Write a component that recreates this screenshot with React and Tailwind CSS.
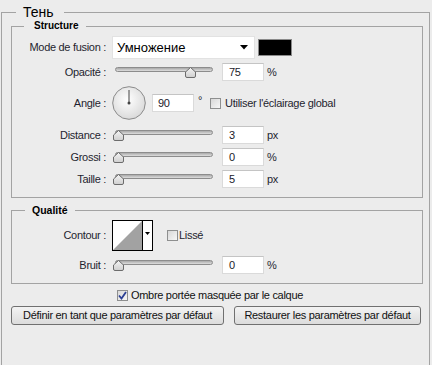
import React from "react";

const font = { fontFamily: '"Liberation Sans", Arial, sans-serif' };

function Slider({ pos }) {
  return (
    <div className="relative w-[104px] h-[18px]">
      <div className="ml-[3px] mt-[4px] w-[98px] h-[5px] rounded-full border border-[#8c8c8c] bg-gradient-to-b from-[#a9a9a9] to-[#dedede]" />
      <svg className="absolute top-[4px]" style={{ left: pos }} width="11" height="11" viewBox="0 0 11 11">
        <defs>
          <linearGradient id="tg" x1="0" y1="0" x2="0" y2="1">
            <stop offset="0" stopColor="#f4f4f4" />
            <stop offset="1" stopColor="#cfcfcf" />
          </linearGradient>
        </defs>
        <path d="M0.5 5 L5.5 0.5 L10.5 5 V9 Q10.5 10.5 9 10.5 H2 Q0.5 10.5 0.5 9 Z" fill="url(#tg)" stroke="#6c6c6c" />
      </svg>
    </div>
  );
}

function Field({ value, pl = "pl-[6px]" }) {
  return (
    <div className={`w-[42px] h-[18px] bg-white border border-[#dadada] border-t-[#c4c4c4] ${pl} flex items-center text-[11px] text-[#1a1a2a]`}>
      {value}
    </div>
  );
}

function Check({ checked }) {
  return (
    <span className="w-[11px] h-[11px] border border-[#8e8f8f] bg-gradient-to-br from-[#d8d8d8] to-[#f7f7f7] flex items-center justify-center shrink-0">
      {checked && (
        <svg width="9" height="9" viewBox="0 0 9 9">
          <path d="M1 4.5 L3.5 7.5 L8 1" fill="none" stroke="#2b3f94" strokeWidth="1.8" />
        </svg>
      )}
    </span>
  );
}

function Label({ children }) {
  return <div className="w-[100px] pr-[6px] text-right text-[11px] text-[#1f1f2f]">{children}</div>;
}

function SliderRow({ label, pos, value, unit, className }) {
  return (
    <div className={`flex items-center h-[18px] ${className}`}>
      <Label>{label}</Label>
      <Slider pos={pos} />
      <div className="ml-[6px]"><Field value={value} /></div>
      <span className="ml-[3px] text-[11px] text-[#1f1f2f]">{unit}</span>
    </div>
  );
}

export default function App() {
  return (
    <div className="w-[432px] h-[365px] overflow-hidden bg-[#ececec] pt-[4px] tracking-[-0.3px]" style={font}>
      <fieldset className="ml-[1px] w-[429px] h-[400px] border border-[#a3a3a3]">
        <legend className="ml-[14px] pl-[7px] pr-[10px] text-[14px] leading-[16px] text-black tracking-normal">Тень</legend>

        {/* Structure */}
        <fieldset className="ml-[9px] w-[412px] border border-[#a3a3a3] pb-[9px]">
          <legend className="ml-[12px] pl-[10px] pr-[8px] text-[10px] leading-[12px] font-bold text-black tracking-normal">Structure</legend>

          <div className="flex items-center h-[23px] mt-[4px]">
            <Label>Mode de fusion :</Label>
            <div className="w-[143px] h-[23px] bg-white border border-[#e2e2e2] flex items-center justify-between pl-[4px] pr-[6px]">
              <span className="text-[13px] text-black tracking-normal">Умножение</span>
              <svg width="8" height="5" viewBox="0 0 8 5"><path d="M0 0 H8 L4 4.5 Z" fill="#000" /></svg>
            </div>
            <div className="ml-[3px] w-[34px] h-[17px] bg-black border border-[#8a8a8a]" />
          </div>

          <SliderRow label="Opacité :" pos={73} value="75" unit="%" className="mt-[4px]" />

          <div className="flex items-center h-[34px] mt-[5px]">
            <Label>Angle :</Label>
            <svg width="34" height="34" viewBox="0 0 34 34">
              <defs>
                <radialGradient id="dg" cx="0.45" cy="0.4" r="0.6">
                  <stop offset="0" stopColor="#ffffff" />
                  <stop offset="1" stopColor="#dadada" />
                </radialGradient>
              </defs>
              <circle cx="17" cy="17" r="16.3" fill="url(#dg)" stroke="#8a8a8a" />
              <line x1="17" y1="17" x2="17" y2="4" stroke="#444" strokeWidth="1" />
              <circle cx="17" cy="17" r="1.5" fill="#444" />
            </svg>
            <div className="ml-[6px]"><Field value="90" pl="pl-[5px]" /></div>
            <span className="ml-[4px] self-start mt-[6px] text-[11px] text-[#1f1f2f]">°</span>
            <span className="ml-[8px]"><Check /></span>
            <span className="ml-[4px] text-[11px] text-[#1f1f2f]">Utiliser l'éclairage global</span>
          </div>

          <SliderRow label="Distance :" pos={1} value="3" unit="px" className="mt-[6px]" />
          <SliderRow label="Grossi :" pos={1} value="0" unit="%" className="mt-[4px]" />
          <SliderRow label="Taille :" pos={1} value="5" unit="px" className="mt-[4px]" />
        </fieldset>

        {/* Qualité */}
        <fieldset className="ml-[9px] mt-[6px] w-[412px] border border-[#a3a3a3] pb-[9px]">
          <legend className="ml-[13px] px-[7px] text-[10.5px] leading-[12px] font-bold text-black tracking-normal">Qualité</legend>

          <div className="flex items-center h-[31px] mt-[4px]">
            <Label>Contour :</Label>
            <div className="w-[41px] h-[31px] border border-black bg-white flex">
              <svg width="29" height="29" viewBox="0 0 29 29" className="shrink-0">
                <path d="M0 29 L29 0 V29 Z" fill="#a2a2a2" />
              </svg>
              <div className="w-[10px] border-l border-black flex items-center justify-center pb-[4px]">
                <svg width="5" height="3" viewBox="0 0 5 3"><path d="M0 0 H5 L2.5 3 Z" fill="#000" /></svg>
              </div>
            </div>
            <span className="ml-[14px]"><Check /></span>
            <span className="ml-[1px] text-[11px] text-[#1f1f2f]">Lissé</span>
          </div>

          <SliderRow label="Bruit :" pos={1} value="0" unit="%" className="mt-[5px]" />
        </fieldset>

        <div className="flex items-center h-[11px] mt-[6px] ml-[115px]">
          <Check checked />
          <span className="ml-[3px] text-[11px] text-[#111]">Ombre portée masquée par le calque</span>
        </div>

        <div className="flex mt-[5px] ml-[9px] gap-[10px]">
          <button className="w-[213px] h-[19px] rounded-[3px] border border-[#707070] bg-gradient-to-b from-[#f3f3f3] to-[#dcdcdc] text-[11px] text-[#111] flex items-center justify-center">
            Définir en tant que paramètres par défaut
          </button>
          <button className="w-[187px] h-[19px] rounded-[3px] border border-[#707070] bg-gradient-to-b from-[#f3f3f3] to-[#dcdcdc] text-[11px] text-[#111] flex items-center justify-center">
            Restaurer les paramètres par défaut
          </button>
        </div>
      </fieldset>
    </div>
  );
}
